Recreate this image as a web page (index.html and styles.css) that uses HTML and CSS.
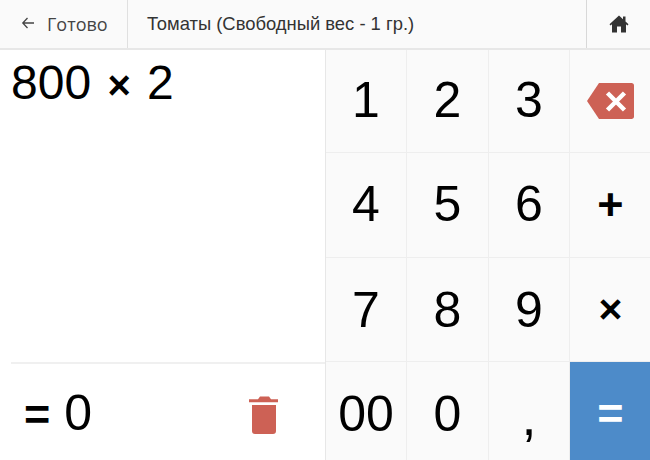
FILE: index.html
```html
<!DOCTYPE html>
<html lang="ru">
<head>
    <meta charset="UTF-8">
    <title>Калькулятор веса</title>
    <link rel="stylesheet" href="styles.css">
</head>
<body>
    <div class="topbar">
        <div class="back">
            <svg class="back-arrow" viewBox="0 0 14 14" width="14" height="14"><path d="M13 7H2M6.500 2L1.800 7l4.700 5" fill="none" stroke="#444" stroke-width="1.300"/></svg>
            <span>Готово</span>
        </div>
        <div class="title">Томаты (Свободный вес - 1 гр.)</div>
        <div class="home">
            <svg viewBox="0 0 20 18" width="20" height="18"><path d="M10 0.5L0.5 9.2 1.6 10.4 3 9.2V17.5H8V11.5H12V17.5H17V9.2L18.4 10.4 19.5 9.2 16.5 6.4V1.5H14V4.2Z" fill="#333"/></svg>
        </div>
    </div>
    <div class="main">
        <div class="calc">
            <div class="expr">800 <span class="times">×</span> 2</div>
            <div class="result">
                <div class="total"><span class="eq">=</span> 0</div>
                <svg class="trash" viewBox="0 0 29 38" width="29" height="38"><path d="M0 3.200H9L11 0.500H20L22 3.200H29V6.300H0ZM3 9H27V35Q27 38 24 38H6Q3 38 3 35Z" fill="#cd6155"/></svg>
            </div>
        </div>
        <div class="keypad">
            <div class="key">1</div>
            <div class="key">2</div>
            <div class="key">3</div>
            <div class="key">
                <svg viewBox="0 0 47 36" width="47" height="36"><path d="M12 0H44.500C46 0 47 1 47 2.500V33.500C47 35 46 36 44.500 36H12L0 18Z" fill="#cd6155"/><path d="M20.500 10L37.500 27M37.500 10L20.500 27" stroke="#fff" stroke-width="4.500" fill="none"/></svg>
            </div>
            <div class="key">4</div>
            <div class="key">5</div>
            <div class="key">6</div>
            <div class="key op">+</div>
            <div class="key">7</div>
            <div class="key">8</div>
            <div class="key">9</div>
            <div class="key op times-key">×</div>
            <div class="key">00</div>
            <div class="key">0</div>
            <div class="key comma">,</div>
            <div class="key op equals">=</div>
        </div>
    </div>
</body>
</html>
```

FILE: styles.css
```css
html, body {
    margin: 0;
    height: 460px;
    overflow: hidden;
}
body {
    font-family: "Liberation Sans", Arial, sans-serif;
    background-color: #ffffff;
    color: #000000;
}
.topbar {
    display: flex;
    height: 48px;
    background-color: #fafafa;
    border-bottom: 2px solid #e7e7e7;
    font-size: 18.4px;
    color: #333333;
}
.back {
    display: flex;
    align-items: center;
    gap: 12px;
    width: 128px;
    box-sizing: border-box;
    padding-left: 21px;
    border-right: 1px solid #e0e0e0;
    font-family: "Open Sans", sans-serif;
    font-size: 18px;
    color: #444444;
}
.back-arrow {
    margin-bottom: 3px;
}
.title {
    flex: 1;
    padding-left: 19px;
    line-height: 47px;
}
.home {
    display: flex;
    align-items: center;
    justify-content: center;
    width: 64px;
    box-sizing: border-box;
    padding-left: 1px;
    border-left: 1px solid #d8d8d8;
}
.main {
    display: flex;
    height: 410px;
}
.calc {
    display: flex;
    flex-direction: column;
    width: 326px;
    box-sizing: border-box;
    padding-left: 11px;
    border-right: 1px solid #e7e7e7;
}
.expr {
    flex: 1;
    font-size: 48px;
    line-height: 66px;
}
.times {
    font-weight: bold;
    font-size: 40px;
    margin: 0 3px;
}
.result {
    display: flex;
    align-items: center;
    justify-content: space-between;
    height: 96px;
    padding: 0 47px 0 13px;
    border-top: 2px solid #f0f0f0;
}
.total {
    font-size: 50px;
    padding-top: 2px;
}
.eq {
    font-weight: bold;
    font-size: 45px;
}
.trash {
    margin-top: 6px;
}
.keypad {
    flex: 1;
    display: grid;
    grid-template-columns: 81px 82px 81px 80px;
    grid-template-rows: 103px 105px 104px 104px;
    background-color: #fafafa;
}
.key {
    display: flex;
    align-items: center;
    justify-content: center;
    padding-bottom: 3px;
    box-sizing: border-box;
    font-size: 50px;
    border-right: 1px solid #eeeeee;
    border-bottom: 1px solid #eeeeee;
}
.key:nth-child(n+9) {
    padding-bottom: 0;
}
.key:nth-child(4n) {
    border-right: none;
    padding-bottom: 0;
}
.op {
    font-weight: bold;
    font-size: 45px;
    padding-left: 1px;
}
.times-key {
    font-size: 41px;
}
.comma {
    padding-top: 4px;
    font-size: 54px;
}
.equals {
    background-color: #4d8bc9;
    color: #ffffff;
    border-bottom: none;
}
```
